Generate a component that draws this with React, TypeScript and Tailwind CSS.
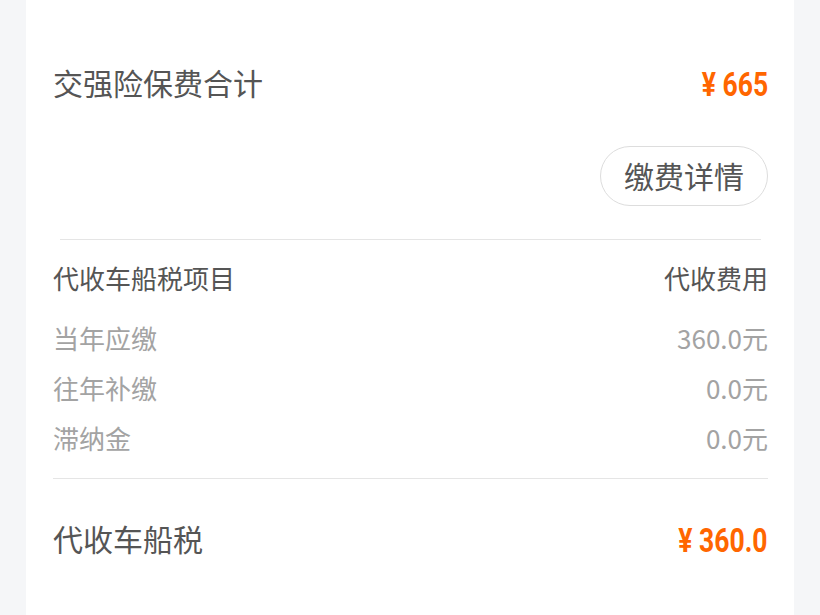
import React from "react";

const cjk = { fontFamily: '"Noto Sans CJK SC", "Noto Sans", sans-serif' };

function Price({ children }: { children: React.ReactNode }) {
  return (
    <span
      className="inline-block origin-right scale-x-[0.78] text-[34px] font-bold leading-none text-[#ff6600]"
      style={{ fontFamily: 'Roboto, "Liberation Sans", sans-serif' }}
    >
      {children}
    </span>
  );
}

function Row({ label, value }: { label: string; value: string }) {
  return (
    <div className="flex h-[50px] items-center justify-between text-[26px] text-[#a3a3a3]">
      <span>{label}</span>
      <span>{value}</span>
    </div>
  );
}

export default function App() {
  return (
    <div className="h-[615px] w-[820px] overflow-hidden bg-[#f5f6f8] px-[26px]" style={cjk}>
      <div className="flex h-full flex-col bg-white pl-[27px] pr-[26px] pt-[52px]">
        <div className="flex h-[60px] items-center justify-between">
          <span className="text-[30px] text-[#555]">交强险保费合计</span>
          <span className="pt-[4px]">
            <Price>¥ 665</Price>
          </span>
        </div>
        <div className="mt-[34px] flex justify-end">
          <div className="flex h-[60px] w-[168px] items-center justify-center rounded-full border border-[#dddddd] pb-[2px] text-[30px] text-[#555]">
            缴费详情
          </div>
        </div>
        <div className="mx-[7px] mt-[33px] h-px bg-[#e5e5e5]" />
        <div className="mt-[12px] flex h-[50px] items-center justify-between text-[26px] text-[#555]">
          <span>代收车船税项目</span>
          <span>代收费用</span>
        </div>
        <div className="mt-[10px] flex flex-col">
          <Row label="当年应缴" value="360.0元" />
          <Row label="往年补缴" value="0.0元" />
          <Row label="滞纳金" value="0.0元" />
        </div>
        <div className="mt-[16px] h-px bg-[#e5e5e5]" />
        <div className="mt-[29px] flex h-[60px] items-center justify-between">
          <span className="text-[30px] text-[#555]">代收车船税</span>
          <span className="pt-[4px]">
            <Price>¥ 360.0</Price>
          </span>
        </div>
      </div>
    </div>
  );
}
